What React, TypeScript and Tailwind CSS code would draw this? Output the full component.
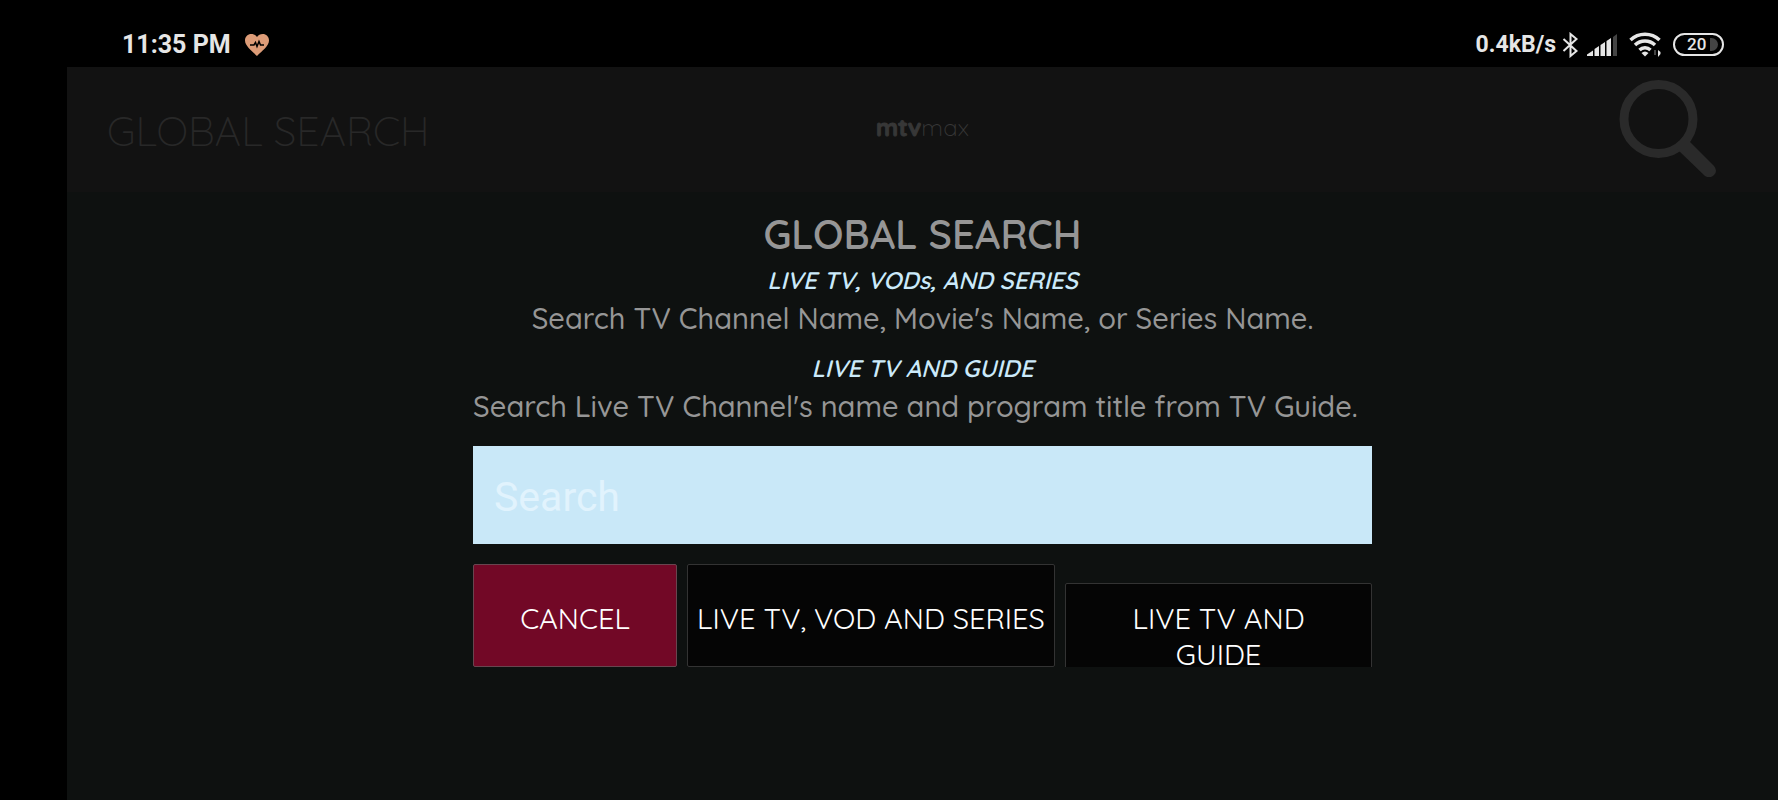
import type { ReactNode } from 'react';

function StatusBar() {
  return (
    <div className="h-[67px] pt-[22px] pl-[122px] pr-[54px] flex items-center justify-between bg-black text-[#e6e6e6] font-bold leading-[44px] font-['Roboto',sans-serif]">
      <div className="flex items-center gap-3.5">
        <span className="text-[25px]">11:35 PM</span>
        <svg width="24" height="22" viewBox="0 0 24 22">
          <path d="M12 22C7 17 0 12 0 6.500C0 2.500 3 0 6.200 0C8.700 0 10.900 1.200 12 3C13.100 1.200 15.300 0 17.800 0C21 0 24 2.500 24 6.500C24 12 17 17 12 22Z" fill="#dd9c78" />
          <path d="M5 11H9L10.500 8.500L12 12.500L14 7.500L15.500 11H19" fill="none" stroke="#000" strokeWidth="1.500" />
        </svg>
      </div>
      <div className="flex items-center">
        <span className="text-[23px]">0.4kB/s</span>
        <svg className="ml-1.5" width="17" height="26" viewBox="0 0 17 26" fill="none" stroke="#e6e6e6" strokeWidth="2">
          <path d="M1.500 7L14.500 19L8.500 24V2L14.500 7L1.500 19" />
        </svg>
        <svg className="ml-2" width="30" height="22" viewBox="0 0 30 22" fill="#e6e6e6">
          <path d="M0 22V20.500L6 16.500V22ZM7.500 15L12 12V22H7.500ZM13.500 11L18 8V22H13.500ZM19.500 7L24 4V22H19.500Z" />
          <path d="M26 3L30 0V22H26Z" fill="#444" />
        </svg>
        <svg className="ml-3" width="32" height="25" viewBox="0 0 32 25" fill="none" stroke="#e6e6e6" strokeWidth="3.500">
          <path d="M1.500 8A21 21 0 0 1 30.500 8M6 13A14.500 14.500 0 0 1 26 13M10.500 18A8 8 0 0 1 21.500 18" />
          <path d="M12.500 21Q16 18 19.500 21L16 24.500Z" fill="#e6e6e6" stroke="none" />
          <path d="M26 18V23" stroke="#444" strokeWidth="2" />
          <path d="M29 18V25L31.500 22V20Z" fill="#e6e6e6" stroke="none" />
        </svg>
        <div className="ml-3 w-[51px] h-[23px] rounded-full border-2 border-[#e6e6e6] pl-3 pr-1 flex items-center justify-between text-[17px] leading-[19px] font-medium">
          20
          <span className="w-2 h-[13px] rounded-r-full bg-[#444]" />
        </div>
      </div>
    </div>
  );
}

function Header() {
  return (
    <header className="h-[125px] px-10 grid grid-cols-3 items-start bg-[#121212] text-[#282828]">
      <div className="pt-10 text-[41px] leading-[48px] font-light whitespace-nowrap">GLOBAL SEARCH</div>
      <div className="pt-12 text-center text-2xl leading-6 text-[#373737]">
        <span className="font-bold [-webkit-text-stroke:1px_#373737]">mtv</span>
        <span className="font-light">max</span>
      </div>
      <svg className="mt-3 mr-[22px] justify-self-end" width="98" height="98" viewBox="0 0 98 98" fill="none" stroke="#2a2a2a">
        <circle cx="40.500" cy="40" r="34.500" strokeWidth="9" />
        <path d="M69 60L96 87Q100 92 96 96Q92 100 87 97L59 70Z" fill="#2a2a2a" stroke="none" />
      </svg>
    </header>
  );
}

function Hint({ title, children }: { title: string; children: ReactNode }) {
  return (
    <div className="h-[88px] flex flex-col items-center">
      <h2 className="text-[24px] leading-9 italic font-semibold text-[#cbeafa]">{title}</h2>
      {children}
    </div>
  );
}

const hintText = 'text-[29px] leading-10 font-medium text-[#969696] whitespace-nowrap';
const buttonStyle = 'shrink-0 rounded-xs border text-[29px] leading-9 text-white';

function SearchDialog() {
  return (
    <form className="w-full max-w-[899px] mx-auto pt-3.5">
      <h1 className="text-center text-[40px] leading-[56px] font-semibold text-[#969696]">GLOBAL SEARCH</h1>
      <Hint title="LIVE TV, VODs, AND SERIES">
        <p className={hintText}>Search TV Channel Name, Movie's Name, or Series Name.</p>
      </Hint>
      <Hint title="LIVE TV AND GUIDE">
        <p className={`${hintText} self-start`}>Search Live TV Channel's name and program title from TV Guide.</p>
      </Hint>
      <input
        type="text"
        aria-label="Search"
        placeholder="Search"
        className="mt-2 block w-full h-[98px] px-[21px] pt-1 bg-[#c9e8f8] text-[#111] text-[41px] font-['Roboto',sans-serif] placeholder:text-[#e1f3fd]"
      />
      <div className="mt-5 h-[103px] flex items-baseline gap-2.5 overflow-hidden">
        <button type="button" className={`${buttonStyle} w-[204px] pt-[35px] pb-[30px] bg-[#720826] border-[#68454f]`}>CANCEL</button>
        <button type="submit" className={`${buttonStyle} w-[368px] pt-[35px] pb-[30px] bg-[#050505] border-[#333] whitespace-nowrap`}>LIVE TV, VOD AND SERIES</button>
        <button type="button" className={`${buttonStyle} w-[307px] px-14 pt-4 pb-4 bg-[#050505] border-[#333]`}>LIVE TV AND GUIDE</button>
      </div>
    </form>
  );
}

export default function App() {
  return (
    <div className="min-h-screen bg-black font-['Quicksand','Lato',sans-serif]">
      <StatusBar />
      <main className="ml-[67px] min-h-[calc(100vh-67px)] bg-[#0e1110]">
        <Header />
        <SearchDialog />
      </main>
    </div>
  );
}
